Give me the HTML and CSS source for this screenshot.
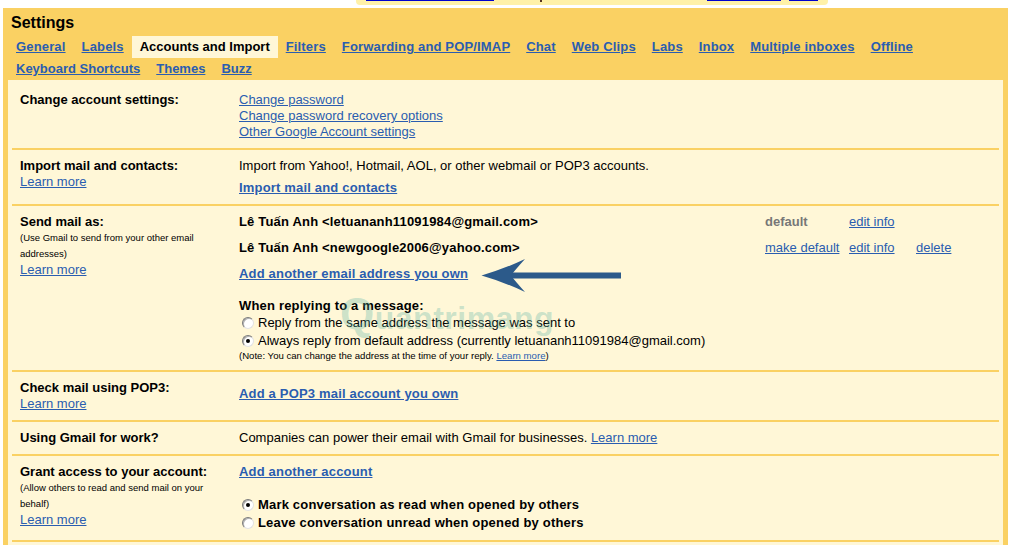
FILE: index.html
```html
<!DOCTYPE html>
<html>
<head>
<meta charset="utf-8">
<link rel="stylesheet" href="styles.css">
</head>
<body>
<div class="topbar">
  <span class="tb-u u1"></span><span class="tb-mark"></span><span class="tb-u u2"></span><span class="tb-u u3"></span>
</div>
<div class="panel">
  <h1 class="title">Settings</h1>
  <nav class="tabs">
    <a class="tab" href="#">General</a>
    <a class="tab" href="#">Labels</a>
    <span class="tab active">Accounts and Import</span>
    <a class="tab" href="#">Filters</a>
    <a class="tab" href="#">Forwarding and POP/IMAP</a>
    <a class="tab" href="#">Chat</a>
    <a class="tab" href="#">Web Clips</a>
    <a class="tab" href="#">Labs</a>
    <a class="tab" href="#">Inbox</a>
    <a class="tab" href="#">Multiple inboxes</a>
    <a class="tab" href="#">Offline</a>
    <a class="tab tab2" href="#">Keyboard Shortcuts</a>
    <a class="tab tab2" href="#">Themes</a>
    <a class="tab tab2" href="#">Buzz</a>
  </nav>
  <div class="content">
    <section class="row">
      <div class="label"><b>Change account settings:</b></div>
      <div class="value">
        <a href="#">Change password</a><br>
        <a href="#">Change password recovery options</a><br>
        <a href="#">Other Google Account settings</a>
      </div>
    </section>
    <section class="row">
      <div class="label"><b>Import mail and contacts:</b><br><a href="#">Learn more</a></div>
      <div class="value">
        <div>Import from Yahoo!, Hotmail, AOL, or other webmail or POP3 accounts.</div>
        <div class="action"><a class="strong" href="#">Import mail and contacts</a></div>
      </div>
    </section>
    <section class="row">
      <div class="label">
        <b>Send mail as:</b>
        <div class="small">(Use Gmail to send from your other email addresses)</div>
        <a href="#">Learn more</a>
      </div>
      <div class="value">
        <div class="addr">
          <b class="cell">Lê Tuấn Anh &lt;letuananh11091984@gmail.com&gt;</b>
          <b class="cell muted">default</b>
          <a class="cell" href="#">edit info</a>
          <span class="cell"></span>
          <b class="cell">Lê Tuấn Anh &lt;newgoogle2006@yahoo.com&gt;</b>
          <a class="cell" href="#">make default</a>
          <a class="cell" href="#">edit info</a>
          <a class="cell" href="#">delete</a>
        </div>
        <div><a class="strong" href="#">Add another email address you own</a></div>
        <div class="reply-head"><b>When replying to a message:</b></div>
        <div class="opt"><span class="radio"></span>Reply from the same address the message was sent to</div>
        <div class="opt"><span class="radio on"></span>Always reply from default address (currently letuananh11091984@gmail.com)</div>
        <div class="note">(Note: You can change the address at the time of your reply. <a href="#">Learn more</a>)</div>
      </div>
    </section>
    <section class="row">
      <div class="label"><b>Check mail using POP3:</b><br><a href="#">Learn more</a></div>
      <div class="value">
        <div class="action"><a class="strong" href="#">Add a POP3 mail account you own</a></div>
      </div>
    </section>
    <section class="row">
      <div class="label"><b>Using Gmail for work?</b></div>
      <div class="value">Companies can power their email with Gmail for businesses. <a href="#">Learn more</a></div>
    </section>
    <section class="row">
      <div class="label">
        <b>Grant access to your account:</b>
        <div class="small">(Allow others to read and send mail on your behalf)</div>
        <a href="#">Learn more</a>
      </div>
      <div class="value">
        <div><a class="strong" href="#">Add another account</a></div>
        <div class="opt bold first"><span class="radio on"></span>Mark conversation as read when opened by others</div>
        <div class="opt bold"><span class="radio"></span>Leave conversation unread when opened by others</div>
      </div>
    </section>
  </div>
</div>
<div class="watermark"><span class="wq">Q</span>uantrimang</div>
<svg class="arrow" width="146" height="40" viewBox="0 0 146 40">
  <rect x="30" y="16.5" width="113" height="6" fill="#2c5a8a"/>
  <path d="M3.5,19.5 Q26,13 47,3 Q37,14 33,19.5 Q37,25 47,36 Q26,26 3.5,19.5 Z" fill="#2c5a8a"/>
</svg>
</body>
</html>
```
FILE: styles.css
```css
html, body {
  margin: 0;
  padding: 0;
  background: #ffffff;
}
body {
  font-family: "Liberation Sans", Arial, sans-serif;
  font-size: 13px;
  line-height: 16px;
  color: #000;
  position: relative;
  width: 1016px;
  height: 545px;
  overflow: hidden;
}
a {
  color: #2a5db0;
  text-decoration: underline;
}

.topbar {
  display: flex;
  align-items: flex-start;
  margin-left: 356px;
  width: 472px;
  height: 5px;
  background: #fff1a8;
  border-radius: 0 0 4px 4px;
}
.tb-u {
  display: block;
  height: 1px;
  background: #0000cc;
}
.u1 { margin-left: 10px; width: 128px; }
.tb-mark { display: block; margin-left: 46px; width: 2px; height: 2px; background: #553322; }
.u2 { margin-left: 165px; width: 74px; }
.u3 { margin-left: 8px; width: 29px; }

.panel {
  margin: 3px 0 0 3px;
  width: 995px;
  padding: 0 5px 0 5px;
  background: #fad163;
  height: 600px;
}
.title {
  margin: 0;
  padding: 6px 3px 0;
  font-size: 16px;
  line-height: 18px;
  font-weight: bold;
  height: 22px;
}
.tabs {
  display: flex;
  flex-wrap: wrap;
}
.tab {
  display: block;
  padding: 0 8px;
  height: 22px;
  line-height: 22px;
  font-weight: bold;
  white-space: nowrap;
  letter-spacing: 0.16px;
}
.tab.tab2 {
  letter-spacing: 0;
}
.tab.active {
  background: #fff7d7;
  color: #000;
  letter-spacing: 0;
}

.content {
  background: #fff7d7;
  padding-top: 4px;
  height: 600px;
}
.row {
  display: grid;
  grid-template-columns: 219px 1fr;
  margin: 0 4px;
  padding: 8px 8px;
  border-bottom: 2px solid #fad163;
}
.label {
  padding-right: 12px;
}
.small {
  font-size: 9.5px;
  line-height: 16px;
}
.action { margin-top: 6px; }
.strong { font-weight: bold; }
.value b, .value .strong, .opt.bold {
  letter-spacing: 0.18px;
}

.addr {
  display: grid;
  grid-template-columns: 526px 84px 67px auto;
}
.addr .cell {
  display: block;
  padding-bottom: 10px;
  white-space: nowrap;
}
.addr .muted { color: #777; letter-spacing: 0; }

.reply-head { margin-top: 16px; }
.opt {
  display: flex;
  align-items: center;
  height: 18px;
}
.opt.bold { font-weight: bold; }
.opt.first { margin-top: 16px; }
.radio {
  display: inline-block;
  box-sizing: border-box;
  width: 12px;
  height: 12px;
  margin: 0 4px 0 3px;
  border-radius: 50%;
  background: #fff;
  border: 1px solid;
  border-color: #7a7a7a #e2e2e2 #e2e2e2 #7a7a7a;
  box-shadow: inset 1px 1px 0 #b0b0b0;
  position: relative;
  flex: none;
}
.radio.on::after {
  content: "";
  position: absolute;
  left: 3px;
  top: 3px;
  width: 4px;
  height: 4px;
  border-radius: 50%;
  background: #000;
}
.note {
  font-size: 9.6px;
  line-height: 12px;
}

.watermark {
  position: absolute;
  left: 340px;
  top: 298px;
  font-size: 32px;
  line-height: 32px;
  font-weight: bold;
  color: rgba(80, 175, 165, 0.3);
  pointer-events: none;
  letter-spacing: 0.5px;
}
.wq {
  font-size: 44px;
}
.arrow {
  position: absolute;
  left: 478px;
  top: 256px;
}
```
